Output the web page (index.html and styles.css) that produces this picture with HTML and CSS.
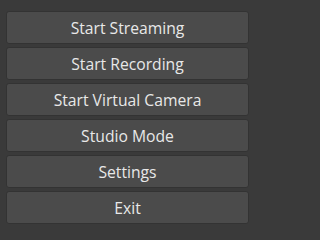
FILE: index.html
```html
<!DOCTYPE html>
<html>
<head>
<meta charset="utf-8">
<link rel="stylesheet" href="styles.css">
</head>
<body>
<div class="controls">
  <button class="btn">Start Streaming</button>
  <button class="btn">Start Recording</button>
  <button class="btn">Start Virtual Camera</button>
  <button class="btn">Studio Mode</button>
  <button class="btn">Settings</button>
  <button class="btn">Exit</button>
</div>
</body>
</html>
```
FILE: styles.css
```css
html, body {
  margin: 0;
  padding: 0;
  background: #3a3a3a;
  width: 255px;
  height: 229px;
  overflow: hidden;
}
.controls {
  display: flex;
  flex-direction: column;
  gap: 3px;
  padding: 11px 6px 0 6px;
}
.btn {
  height: 33px;
  margin: 0;
  padding: 0;
  border: 1px solid #333333;
  border-radius: 3px;
  background: #4b4b4b;
  color: #e8e8e8;
  font-family: "Open Sans", sans-serif;
  font-size: 15.7px;
  text-align: center;
}
```
